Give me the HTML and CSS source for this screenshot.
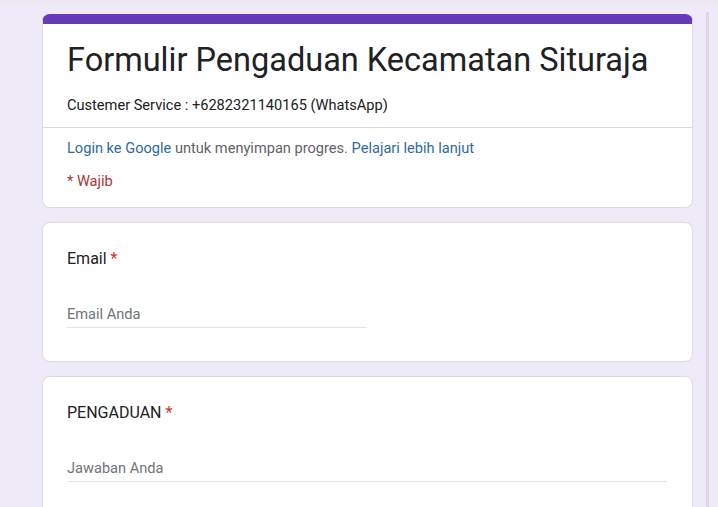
FILE: index.html
```html
<!DOCTYPE html>
<html lang="id">
<head>
    <meta charset="UTF-8">
    <meta name="viewport" content="width=device-width, initial-scale=1.0">
    <title>Formulir Pengaduan Kecamatan Situraja</title>
    <link rel="stylesheet" href="styles.css">
</head>
<body>

    <div class="page">
        <div class="form">

            <!-- Header Card -->
            <div class="card header-card">
                <div class="header-top">
                    <h1>Formulir Pengaduan Kecamatan Situraja</h1>
                    <p class="desc">Custemer Service : +6282321140165 (WhatsApp)</p>
                </div>
                <div class="header-bottom">
                    <p class="login"><a href="#">Login ke Google</a> untuk menyimpan progres. <a href="#">Pelajari lebih lanjut</a></p>
                    <p class="required-note">* Wajib</p>
                </div>
            </div>

            <!-- Email -->
            <div class="card question">
                <div class="q-title">Email <span class="star">*</span></div>
                <input type="email" class="answer short" placeholder="Email Anda">
            </div>

            <!-- Pengaduan -->
            <div class="card question">
                <div class="q-title">PENGADUAN <span class="star">*</span></div>
                <input type="text" class="answer long" placeholder="Jawaban Anda">
            </div>

        </div>
        <div class="scrollbar"></div>
    </div>

</body>
</html>
```

FILE: styles.css
```css
/* Page */
body {
    margin: 0;
    padding: 0;
    background-color: #efeaf7;
    font-family: Roboto, Arial, sans-serif;
    color: #202124;
    overflow: hidden;
}
.page {
    position: relative;
    height: 507px;
    border-top: 4px solid #eceaf1;
}
.form {
    width: 651px;
    margin-left: 42px;
    padding-top: 10px;
    display: flex;
    flex-direction: column;
    gap: 14px;
}
.scrollbar {
    position: absolute;
    top: 8px;
    bottom: 0;
    left: 706px;
    width: 3px;
    background-color: #ddd7e8;
}
/* Cards */
.card {
    background-color: white;
    border: 1px solid #dadce0;
    border-radius: 8px;
    box-sizing: border-box;
}
.header-card {
    border-top: 10px solid #673ab7;
}
.header-top {
    padding: 16px 24px 12px;
    border-bottom: 1px solid #dadce0;
}
h1 {
    margin: 0;
    font-size: 32.5px;
    font-weight: 400;
    line-height: 40px;
    color: #202124;
}
.desc {
    margin: 15px 0 0;
    font-size: 14.6px;
    line-height: 20px;
}
.header-bottom {
    padding: 10px 24px 16px;
}
.login {
    margin: 0;
    font-size: 14.6px;
    line-height: 20px;
    color: #5f6368;
}
.login a {
    color: #2f6b9e;
    text-decoration: none;
}
.required-note {
    margin: 13px 0 0;
    font-size: 14.6px;
    line-height: 20px;
    color: #a5363a;
}
/* Questions */
.question {
    padding: 24px 24px 33px;
}
.q-title {
    font-size: 16px;
    line-height: 24px;
    color: #202124;
}
.star {
    color: #d93025;
}
.answer {
    display: block;
    margin-top: 33px;
    padding: 0 0 3px;
    border: none;
    border-bottom: 1px solid #e4e4e8;
    font-family: Roboto, Arial, sans-serif;
    font-size: 14.6px;
    line-height: 20px;
    outline: none;
    background: transparent;
}
.answer::placeholder {
    color: #70757a;
}
.short {
    width: 300px;
}
.long {
    width: 600px;
}
```
